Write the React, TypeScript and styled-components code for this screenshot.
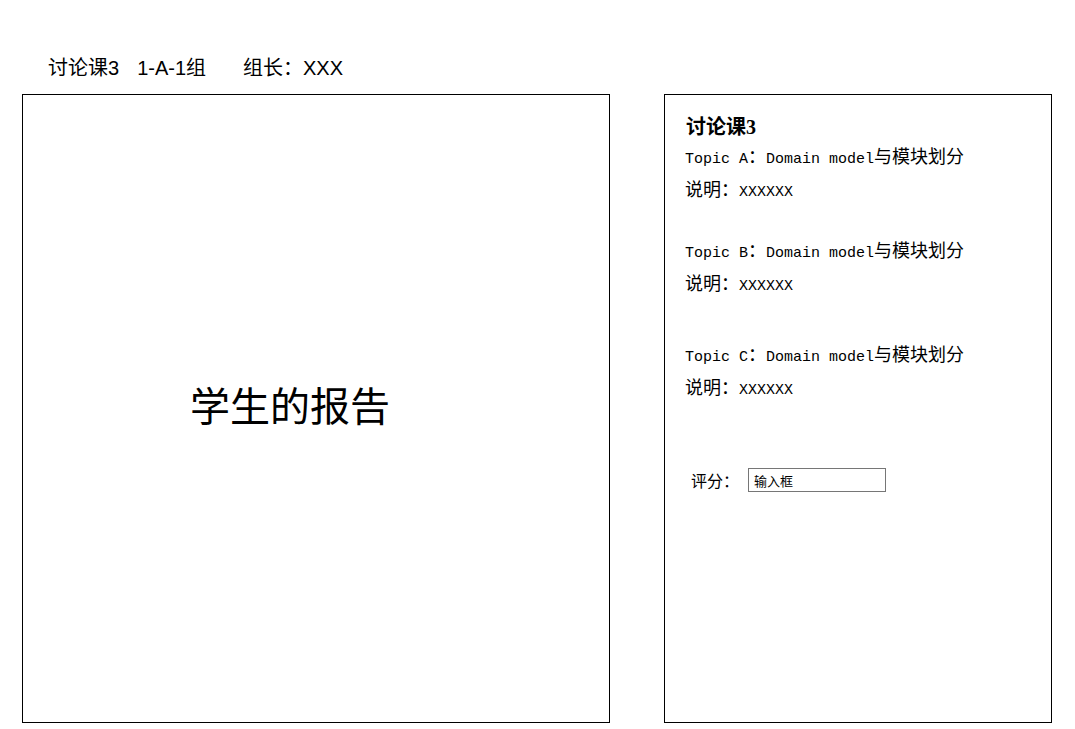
import React from "react";
import styled, { createGlobalStyle } from "styled-components";

const GlobalStyle = createGlobalStyle`
  body {
    margin: 0;
    background: #fff;
    color: #000;
    font-family: "Liberation Sans", "Noto Sans CJK SC", sans-serif;
  }
`;

const PageEl = styled.div`
  padding: 56px 22px 0;
`;
const HeaderEl = styled.div`
  display: flex;
  align-items: center;
  height: 24px;
  padding-left: 26px;
  margin-bottom: 14px;
  font-size: 20px;
  line-height: 24px;
`;
const HeaderItem = styled.span<{ $gap?: number }>`
  margin-left: ${(props) => props.$gap || 0}px;
  white-space: nowrap;
`;
const PanelsRow = styled.div`
  display: flex;
  align-items: flex-start;
  gap: 54px;
`;
const ReportPanel = styled.div`
  box-sizing: border-box;
  width: 588px;
  height: 629px;
  border: 1px solid #000;
  display: flex;
  align-items: center;
  justify-content: center;
  padding: 0 52px 10px 0;
`;
const ReportTitle = styled.div`
  font-family: "Noto Sans CJK SC", sans-serif;
  font-size: 40px;
  line-height: 1;
`;
const InfoPanel = styled.div`
  box-sizing: border-box;
  width: 388px;
  height: 629px;
  border: 1px solid #000;
  padding: 16px 20px 0;
`;
const InfoTitle = styled.div`
  font-family: "Liberation Serif", "Noto Sans CJK SC", serif;
  font-weight: bold;
  font-size: 20px;
  height: 32px;
  line-height: 32px;
  padding-left: 1px;
`;
const TopicBlock = styled.div<{ $space?: number }>`
  margin-top: ${(props) => props.$space || 0}px;
`;
const MonoLine = styled.div`
  font-family: "Liberation Mono", monospace;
  font-size: 15px;
  height: 33px;
  line-height: 33px;
  white-space: nowrap;
`;
const Cjk = styled.span`
  font-family: "Noto Sans CJK SC", sans-serif;
  font-size: 18px;
  line-height: 1;
`;
const RatingRow = styled.div`
  display: flex;
  align-items: center;
  margin-top: 61px;
  padding-left: 6px;
  gap: 9px;
`;
const RatingLabel = styled.span`
  font-family: "Noto Sans CJK SC", sans-serif;
  font-size: 16px;
  width: 48px;
  white-space: nowrap;
`;
const RatingInput = styled.input`
  box-sizing: border-box;
  width: 138px;
  height: 24px;
  border: 1px solid #767676;
  padding: 0 5px;
  font-family: "Noto Sans CJK SC", sans-serif;
  font-size: 13px;
  color: #000;
  outline: none;
  &::placeholder {
    color: #000;
  }
`;

const topics = ["A", "B", "C"];
const topicSpace = [0, 28, 38];

const Topic = ({ letter, space }: { letter: string; space: number }) => (
  <TopicBlock $space={space}>
    <MonoLine>
      Topic {letter}
      <Cjk>：</Cjk>Domain model<Cjk>与模块划分</Cjk>
    </MonoLine>
    <MonoLine>
      <Cjk>说明：</Cjk>XXXXXX
    </MonoLine>
  </TopicBlock>
);

export default function App() {
  return (
    <PageEl>
      <GlobalStyle />
      <HeaderEl>
        <HeaderItem>讨论课3</HeaderItem>
        <HeaderItem $gap={18}>1-A-1组</HeaderItem>
        <HeaderItem $gap={37}>组长：XXX</HeaderItem>
      </HeaderEl>
      <PanelsRow>
        <ReportPanel>
          <ReportTitle>学生的报告</ReportTitle>
        </ReportPanel>
        <InfoPanel>
          <InfoTitle>讨论课3</InfoTitle>
          {topics.map((t, i) => (
            <Topic key={t} letter={t} space={topicSpace[i]} />
          ))}
          <RatingRow>
            <RatingLabel>评分：</RatingLabel>
            <RatingInput placeholder="输入框" />
          </RatingRow>
        </InfoPanel>
      </PanelsRow>
    </PageEl>
  );
}
